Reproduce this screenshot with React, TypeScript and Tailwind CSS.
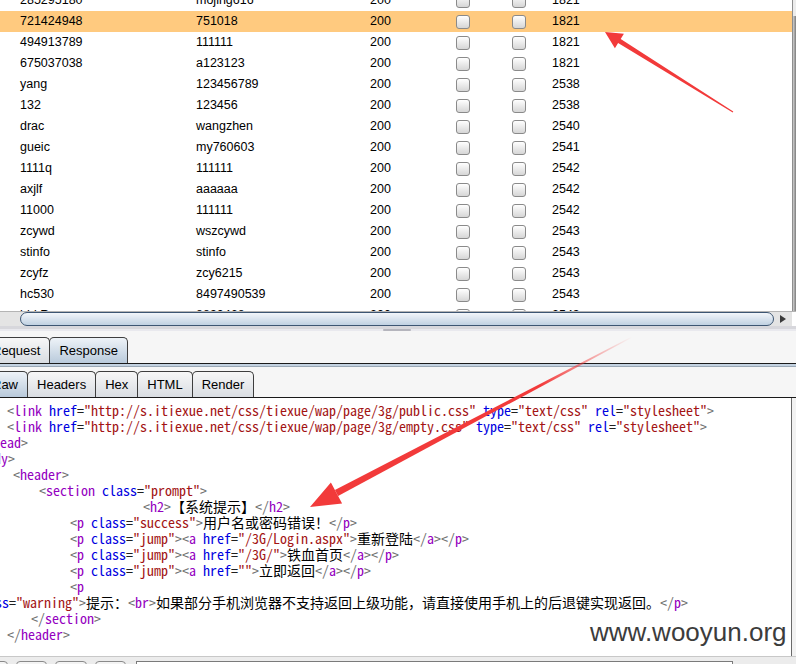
import React from 'react';

type Seg = [string, string];

const rows: string[][] = [
  ['285295180', 'mojing616', '200', '1821'],
  ['721424948', '751018', '200', '1821'],
  ['494913789', '111111', '200', '1821'],
  ['675037038', 'a123123', '200', '1821'],
  ['yang', '123456789', '200', '2538'],
  ['132', '123456', '200', '2538'],
  ['drac', 'wangzhen', '200', '2540'],
  ['gueic', 'my760603', '200', '2541'],
  ['1111q', '111111', '200', '2542'],
  ['axjlf', 'aaaaaa', '200', '2542'],
  ['11000', '111111', '200', '2542'],
  ['zcywd', 'wszcywd', '200', '2543'],
  ['stinfo', 'stinfo', '200', '2543'],
  ['zcyfz', 'zcy6215', '200', '2543'],
  ['hc530', '8497490539', '200', '2543'],
  ['hhkR', '8890468', '200', '2543'],
];

const COLORS: Record<string, string> = {
  p: 'text-[#707070]',
  t: 'text-[#9400c0]',
  a: 'text-[#0000e0]',
  e: 'text-[#202020]',
  v: 'text-[#a31414]',
  x: 'text-black',
};

const linkLine = (file: string): Seg[] => [
  ['p', '<'], ['t', 'link'], ['x', ' '], ['a', 'href'], ['e', '='],
  ['v', `"http://s.itiexue.net/css/tiexue/wap/page/3g/${file}"`], ['x', ' '],
  ['a', 'type'], ['e', '='], ['v', '"text/css"'], ['x', ' '],
  ['a', 'rel'], ['e', '='], ['v', '"stylesheet"'], ['p', '>'],
];

const jump = (href: string, text: string): Seg[] => [
  ['p', '<'], ['t', 'p'], ['x', ' '], ['a', 'class'], ['e', '='], ['v', '"jump"'], ['p', '>'],
  ['p', '<'], ['t', 'a'], ['x', ' '], ['a', 'href'], ['e', '='], ['v', `"${href}"`], ['p', '>'],
  ['x', text], ['p', '</'], ['t', 'a'], ['p', '>'], ['p', '</'], ['t', 'p'], ['p', '>'],
];

const lines: { ml: string; segs: Seg[] }[] = [
  { ml: 'ml-[7px]', segs: linkLine('public.css') },
  { ml: 'ml-[7px]', segs: linkLine('empty.css') },
  { ml: 'ml-[-21px]', segs: [['p', '</'], ['t', 'head'], ['p', '>']] },
  { ml: 'ml-[-27px]', segs: [['p', '<'], ['t', 'body'], ['p', '>']] },
  { ml: 'ml-[13px]', segs: [['p', '<'], ['t', 'header'], ['p', '>']] },
  { ml: 'ml-[39px]', segs: [['p', '<'], ['t', 'section'], ['x', ' '], ['a', 'class'], ['e', '='], ['v', '"prompt"'], ['p', '>']] },
  { ml: 'ml-[143px]', segs: [['p', '<'], ['t', 'h2'], ['p', '>'], ['x', '【系统提示】'], ['p', '</'], ['t', 'h2'], ['p', '>']] },
  { ml: 'ml-[70px]', segs: [['p', '<'], ['t', 'p'], ['x', ' '], ['a', 'class'], ['e', '='], ['v', '"success"'], ['p', '>'], ['x', '用户名或密码错误！'], ['p', '</'], ['t', 'p'], ['p', '>']] },
  { ml: 'ml-[70px]', segs: jump('/3G/Login.aspx', '重新登陆') },
  { ml: 'ml-[70px]', segs: jump('/3G/', '铁血首页') },
  { ml: 'ml-[70px]', segs: jump('', '立即返回') },
  { ml: 'ml-[70px]', segs: [['p', '<'], ['t', 'p']] },
  { ml: 'ml-[-26px]', segs: [['a', 'class'], ['e', '='], ['v', '"warning"'], ['p', '>'], ['x', '提示：'], ['p', '<'], ['t', 'br'], ['p', '>'], ['x', '如果部分手机浏览器不支持返回上级功能，请直接使用手机上的后退键实现返回。'], ['p', '</'], ['t', 'p'], ['p', '>']] },
  { ml: 'ml-[31px]', segs: [['p', '</'], ['t', 'section'], ['p', '>']] },
  { ml: 'ml-[7px]', segs: [['p', '</'], ['t', 'header'], ['p', '>']] },
];

function Box() {
  return <div className="box-border h-[14px] w-[14px] rounded-[3px] border border-[#8a8a8a] bg-linear-to-b from-white to-[#d6d6d6]" />;
}

function Tab({ label, selected, extra }: { label: string; selected?: boolean; extra?: string }) {
  return (
    <div
      className={`box-border flex h-[26px] items-center rounded-t-[5px] border border-b-0 border-[#3e3e3e] pl-[9px] pr-[9px] text-[13px] text-black ${
        selected ? 'bg-linear-to-b from-[#eef3f8] to-[#b9cadb]' : 'bg-linear-to-b from-[#f7f7f7] to-[#d9dde2]'
      } ${extra ?? ''}`}
    >
      {label}
    </div>
  );
}

export default function App() {
  return (
    <div className="relative h-[664px] w-[796px] overflow-hidden bg-[#f6f6f6] font-['Liberation_Sans',Arial,sans-serif]">
      {/* results table */}
      <div className="flex h-[311px]">
        <div className="w-[792px] overflow-hidden bg-white">
          <div className="mt-[-10px]">
            {rows.map((r, i) => (
              <div key={i} className={`flex h-[21px] items-center text-[12.5px] text-black ${i === 1 ? 'bg-[#ffca7f]' : ''}`}>
                <div className="w-[196px] pl-[20px]">{r[0]}</div>
                <div className="w-[174px]">{r[1]}</div>
                <div className="w-[86px]">{r[2]}</div>
                <div className="w-[56px]"><Box /></div>
                <div className="w-[40px]"><Box /></div>
                <div>{r[3]}</div>
              </div>
            ))}
          </div>
        </div>
        <div className="flex w-[4px] flex-col border-l border-[#8e8e8e]">
          <div className="h-[16px] bg-[#ececec]" />
          <div className="flex-1 bg-linear-to-r from-[#d0d0d0] to-[#7c7c7c]" />
        </div>
      </div>

      {/* horizontal scrollbar */}
      <div className="box-border flex h-[15px] border-t border-[#b4b4b4] bg-[#e4e4e4]">
        <div className="w-[20px]" />
        <div className="box-border h-[14px] w-[754px] rounded-[8px] border border-[#3d5673] bg-linear-to-b from-[#f3f6fa] to-[#c0d1e2]" />
        <div className="flex w-[18px] items-center justify-center">
          <svg width="8" height="8" viewBox="0 0 8 8"><path d="M1 0 L7 4 L1 8 Z" fill="#3a3a3a" /></svg>
        </div>
        <div className="w-[4px] bg-white" />
      </div>

      {/* splitter */}
      <div className="flex h-[5px] flex-col">
        <div className="h-[3px] bg-[#d7d7dc]" />
        <div className="flex h-[2px] bg-[#e9e9ee]">
          <div className="ml-[383px] h-[2px] w-[28px] rounded-full bg-[#b5b5bd]" />
        </div>
      </div>

      {/* request/response tabs */}
      <div className="flex h-[32px] items-end">
        <Tab label="Request" extra="ml-[-18px]" />
        <Tab label="Response" selected extra="-ml-px" />
      </div>
      <div className="h-px bg-[#1a1a1a]" />
      <div className="h-[2px] bg-[#c3d2e1]" />
      <div className="h-px bg-[#9aa8b6]" />

      {/* raw/headers tabs */}
      <div className="flex h-[30px] items-end">
        <Tab label="Raw" selected extra="ml-[-18px]" />
        <Tab label="Headers" extra="-ml-px" />
        <Tab label="Hex" extra="-ml-px" />
        <Tab label="HTML" extra="-ml-px" />
        <Tab label="Render" extra="-ml-px" />
      </div>
      <div className="h-px bg-[#1a1a1a]" />

      {/* code */}
      <div className="flex h-[258px]">
        <div className="box-border w-[792px] overflow-hidden border-r border-[#6a6a6a] bg-white pt-[4px] font-['Noto_Sans_Mono_CJK_SC','Liberation_Mono','Noto_Sans_CJK_SC',monospace] text-[14px] leading-[16px]">
          {lines.map((l, i) => (
            <div key={i} className="h-[16px] whitespace-pre">
              <div className={`inline-block ${l.ml}`}>
                {l.segs.map((s, j) => (
                  <span key={j} className={COLORS[s[0]]}>{s[1]}</span>
                ))}
              </div>
            </div>
          ))}
        </div>
        <div className="flex-1 bg-[#f2f2f2]" />
      </div>

      {/* bottom search bar */}
      <div className="flex h-[8px] gap-[8px] overflow-hidden border-t border-[#c8c8c8] bg-[#ececec] pt-[4px]">
        <div className="ml-[-24px] h-[20px] w-[32px] shrink-0 rounded-[4px] border border-[#8a8a8a] bg-[#f4f4f4]" />
        <div className="h-[20px] w-[31px] shrink-0 rounded-[4px] border border-[#8a8a8a] bg-[#f4f4f4]" />
        <div className="h-[20px] w-[32px] shrink-0 rounded-[4px] border border-[#8a8a8a] bg-[#f4f4f4]" />
        <div className="h-[20px] w-[31px] shrink-0 rounded-[4px] border border-[#8a8a8a] bg-[#f4f4f4]" />
        <div className="ml-[2px] h-[20px] w-[597px] shrink-0 border border-[#7a7a7a] bg-white" />
      </div>

      {/* watermark */}
      <div className="absolute left-[590px] top-[619px] text-[26px] leading-[26px] text-[#3c3c3c] [text-shadow:0_0_2px_#ffffff]">
        www.wooyun.org
      </div>

      {/* annotation arrows */}
      <svg className="pointer-events-none absolute left-0 top-0" width="796" height="664" viewBox="0 0 796 664">
        <defs>
          <linearGradient id="fade2" gradientUnits="userSpaceOnUse" x1="632" y1="337" x2="540" y2="386">
            <stop offset="0" stopColor="#f23a3a" stopOpacity="0" />
            <stop offset="1" stopColor="#f23a3a" stopOpacity="1" />
          </linearGradient>
        </defs>
        <polygon points="605,32 623.9,33.8 620.7,38.9 733.3,111.6 732.7,112.4 618.1,43.1 614.9,48.2" fill="#f23a3a" />
        <polygon points="334.9,489.9 631.8,336.6 632.2,337.4 338.1,496.1" fill="url(#fade2)" />
        <polygon points="310,507 330.9,482.4 334.9,489.9 338.1,496.1 342.1,503.6" fill="#f23a3a" />
      </svg>
    </div>
  );
}
